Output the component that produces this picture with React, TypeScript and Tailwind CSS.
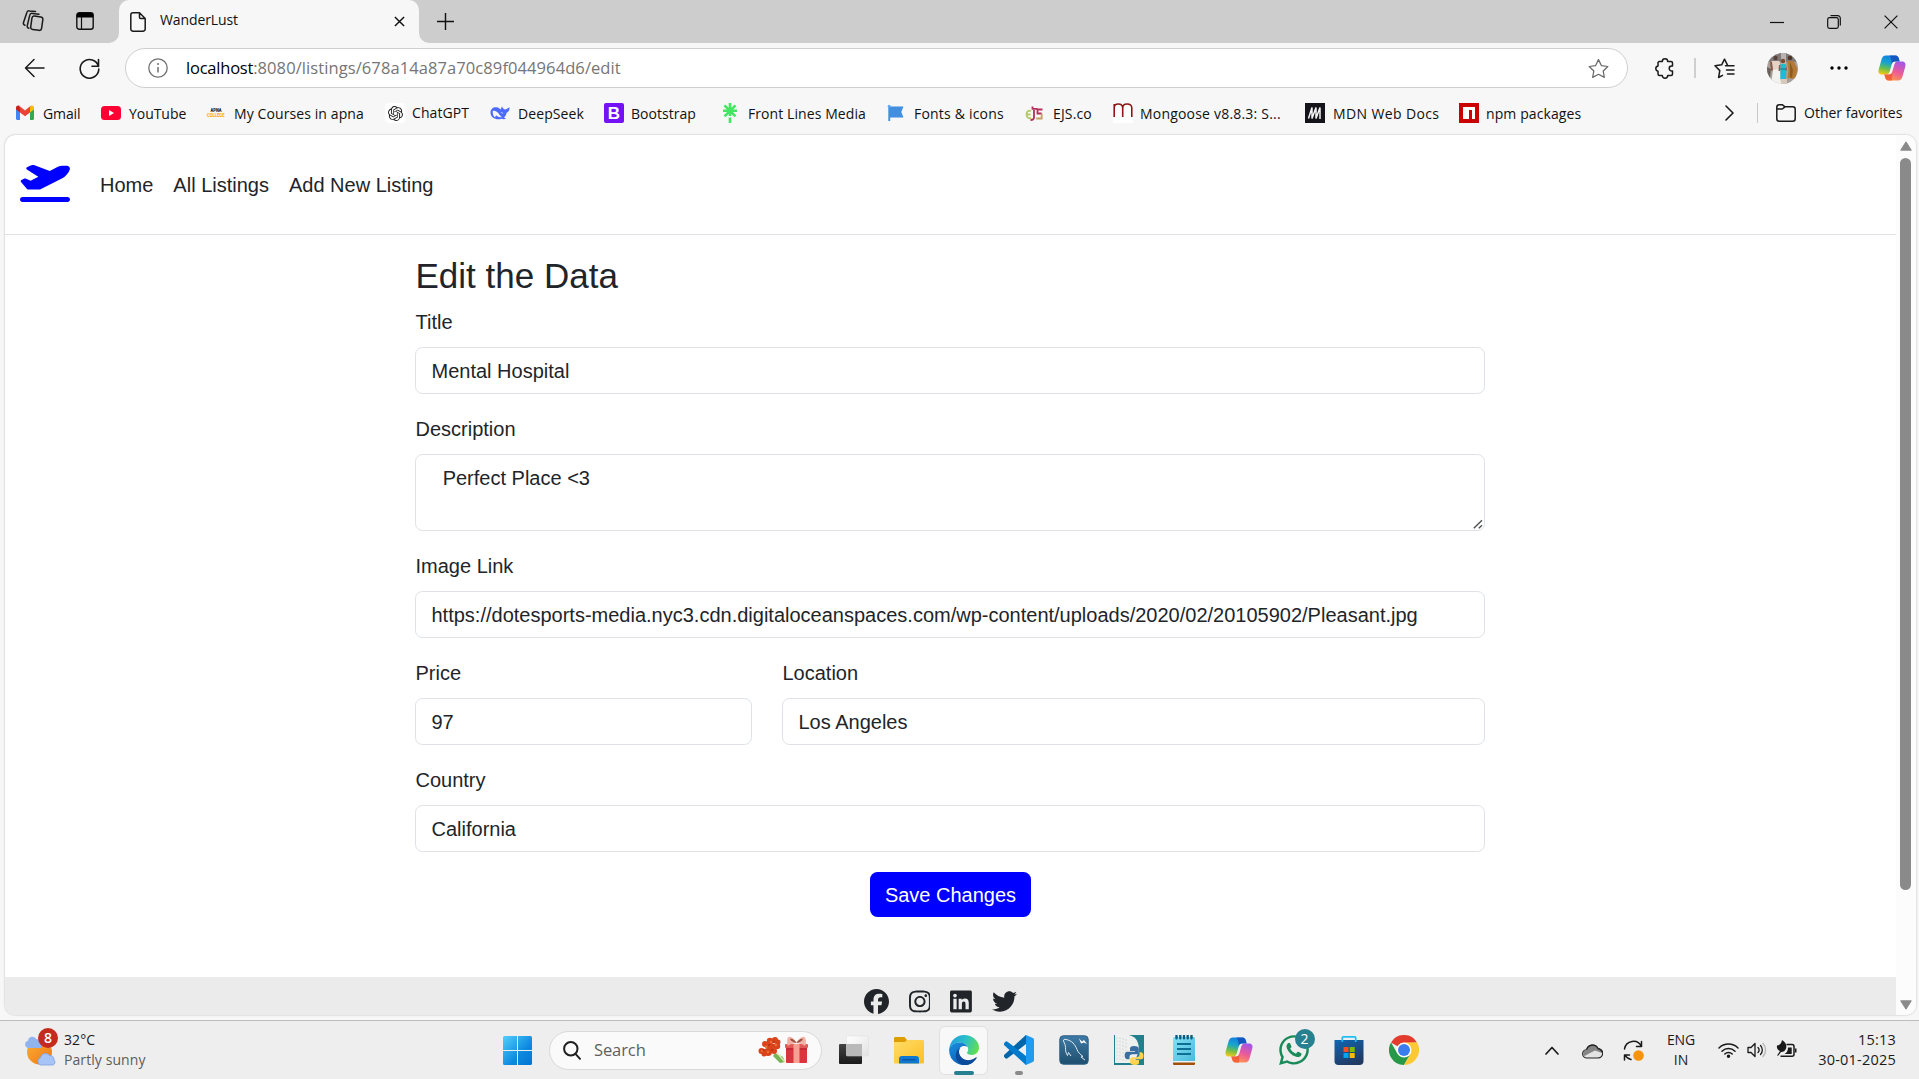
import React from "react";
import { FaPlaneDeparture, FaFacebook, FaInstagram, FaLinkedin, FaTwitter, FaWhatsapp } from "react-icons/fa6";
import { SiOpenai } from "react-icons/si";

const UI = "font-['Open_Sans',sans-serif]";

function CopilotIcon({ id, className }: { id: string; className: string }) {
  return (
    <svg viewBox="0 0 28 26" className={className}>
      <defs>
        <linearGradient id={id + "a"} x1="0.5" y1="0" x2="0.25" y2="1">
          <stop offset="0" stopColor="#0f7fe6" />
          <stop offset="0.4" stopColor="#1aa5c9" />
          <stop offset="0.7" stopColor="#6cc04a" />
          <stop offset="1" stopColor="#f6c813" />
        </linearGradient>
        <linearGradient id={id + "b"} x1="0.7" y1="0" x2="0.3" y2="1">
          <stop offset="0" stopColor="#a456e8" />
          <stop offset="0.5" stopColor="#ea5a9a" />
          <stop offset="1" stopColor="#ff9a4c" />
        </linearGradient>
      </defs>
      <path d="M8 .5h9.500c2 0 2.800 1.400 3.300 3l.9 3H17c-2 0-2.800 1.200-3.300 3l-2 7c-.6 2-1.700 3-3.700 3H4.500C1 19.500 0 17.500.7 14.500L3.500 4.500C4.300 1.800 5.500.5 8 .5z" fill={`url(#${id}a)`} />
      <path d="M14 .5h3.500c2 0 2.800 1.400 3.300 3l.9 3H17c-2 0-2.800 1.200-3.300 3C13.500 6 13.500 3 11.500.5z" fill="#1647b5" opacity=".75" />
      <path d="M20 25.500h-9.500c-2 0-2.800-1.400-3.300-3l-.9-3H11c2 0 2.800-1.200 3.300-3l2-7c.6-2 1.700-3 3.700-3h3.500c3.500 0 4.500 2 3.800 5L24.500 21.500c-.8 2.700-2 4-4.500 4z" fill={`url(#${id}b)`} />
      <path d="M14 25.500h-3.500c-2 0-2.800-1.400-3.300-3l-.9-3H11c2 0 2.800-1.200 3.300-3z" fill="#f0532f" opacity=".75" />
    </svg>
  );
}

const line = { fill: "none", stroke: "#1a1a1a", strokeLinecap: "round" as const, strokeLinejoin: "round" as const };

function TitleBar() {
  return (
    <div className="flex h-[43px] bg-[#cdcdcd]">
      <div className="flex w-[119px] shrink-0 items-center pb-px pl-[22px]">
        <svg viewBox="0 0 22 22" className="h-[22px] w-[22px]" {...line} strokeWidth="1.500">
          <rect x="9.300" y="6.500" width="11" height="13.500" rx="2.300" transform="rotate(8 15 13)" />
          <path d="M17 4.200 10.500 3.400a2.500 2.500 0 0 0-2.800 2L5.300 15.500a2.200 2.200 0 0 0 1.500 2.700M13.500 1.500 7.500.9A2.500 2.500 0 0 0 4.700 2.900L1.500 12.500a2.200 2.200 0 0 0 1.400 2.700" />
        </svg>
        <svg viewBox="0 0 18 18" className="ml-[32px] h-[18px] w-[18px]">
          <rect x=".8" y=".8" width="16.400" height="16.400" rx="2.500" fill="none" stroke="#111" strokeWidth="1.400" />
          <path d="M.8 5.500V3.300A2.500 2.500 0 0 1 3.300.8h11.400a2.500 2.500 0 0 1 2.500 2.500v2.200z" fill="#000" />
          <path d="M5.500 5v12" stroke="#111" strokeWidth="1.200" />
        </svg>
      </div>
      <div className="relative flex w-[300px] shrink-0 items-center rounded-t-[10px] bg-[#f7f7f7] pl-[11px]">
        <svg viewBox="0 0 10 10" className="absolute bottom-0 -left-[10px] h-[10px] w-[10px]"><path d="M10 0v10H0A10 10 0 0 0 10 0z" fill="#f7f7f7" /></svg>
        <svg viewBox="0 0 10 10" className="absolute -right-[10px] bottom-0 h-[10px] w-[10px]"><path d="M0 0v10h10A10 10 0 0 1 0 0z" fill="#f7f7f7" /></svg>
        <svg viewBox="0 0 16 20" className="h-5 w-4" {...line} strokeWidth="1.500">
          <path d="M9.500.8H3A2.200 2.200 0 0 0 .8 3v14A2.200 2.200 0 0 0 3 19.200h10a2.200 2.200 0 0 0 2.200-2.200V6.500zM9.500.8v4.500a1.200 1.200 0 0 0 1.200 1.200h4.500" />
        </svg>
        <span className="ml-[14px] w-[234px] pb-[3px] text-[14px] leading-[20px] tracking-[-0.1px] text-[#111]">WanderLust</span>
        <svg viewBox="0 0 12 12" className="h-[11px] w-[11px]"><path d="M1 1l10 10M11 1 1 11" stroke="#111" strokeWidth="1.600" /></svg>
      </div>
      <div className="flex flex-1 items-center pb-px pl-[18px]">
        <svg viewBox="0 0 18 18" className="h-[17px] w-[17px]"><path d="M9 0v18M0 9h18" stroke="#111" strokeWidth="1.500" /></svg>
      </div>
      <div className="flex items-center pr-[21px]">
        <svg viewBox="0 0 14 14" className="h-[14px] w-[14px]"><path d="M0 7.500h14" stroke="#111" strokeWidth="1.200" /></svg>
        <svg viewBox="0 0 14 14" className="ml-[43px] h-[14px] w-[14px]" fill="none" stroke="#111" strokeWidth="1.200">
          <rect x=".7" y="2.700" width="10.600" height="10.600" rx="1.800" />
          <path d="M3.500.7h7.300a2.500 2.500 0 0 1 2.500 2.500v7.300" />
        </svg>
        <svg viewBox="0 0 14 14" className="ml-[43px] h-[14px] w-[14px]"><path d="M.6.6l12.800 12.800M13.400.6.6 13.400" stroke="#111" strokeWidth="1.200" /></svg>
      </div>
    </div>
  );
}

function Toolbar() {
  return (
    <div className="flex h-[50px] items-center pl-6">
      <svg viewBox="0 0 21 20" className="h-5 w-[21px]" {...line} strokeWidth="1.500"><path d="M20 10H1.500M10 1.500 1.500 10l8.500 8.500" /></svg>
      <svg viewBox="0 0 21 21" className="ml-[34px] h-[21px] w-[21px]" {...line} strokeWidth="1.600"><path d="M19.500 8.500A9.300 9.300 0 1 0 19.800 11M19.500 1.500v6.800h-6.500" /></svg>
      <div className="ml-[25px] flex h-10 w-[1503px] shrink-0 items-center rounded-full border border-[#cfcfcf] bg-white pl-[22px]">
        <svg viewBox="0 0 20 20" className="h-5 w-5"><circle cx="10" cy="10" r="9.200" fill="none" stroke="#707070" strokeWidth="1.300" /><path d="M10 9v5.500" stroke="#707070" strokeWidth="1.500" /><circle cx="10" cy="6" r="1" fill="#707070" /></svg>
        <span className="ml-[18px] flex-1 whitespace-nowrap text-[16.5px] leading-[24px] tracking-[0.09px] text-[#757575]">
          <span className="tracking-[-0.22px] text-black">localhost</span>:8080/listings/678a14a87a70c89f044964d6/edit
        </span>
        <svg viewBox="0 0 22 21" className="mr-[18px] h-[21px] w-[21px]" fill="none" stroke="#6a6a6a" strokeWidth="1.300" strokeLinejoin="round"><path d="M11 1.200l3 6.200 6.800 1-4.900 4.700 1.200 6.700-6.100-3.200-6.100 3.200 1.200-6.700L1.200 8.400l6.800-1z" /></svg>
      </div>
      <svg viewBox="0 0 19 21" className="ml-[27px] h-[21px] w-[19px]" {...line} strokeWidth="1.500">
        <path d="M4 3.500h3.300a2.700 2.700 0 0 1 5.400 0H16a1.500 1.500 0 0 1 1.500 1.500v3h-.8a2.500 2.500 0 0 0 0 5h.8v3a1.500 1.500 0 0 1-1.500 1.500h-3.300a2.700 2.700 0 0 1-5.400 0H4.500A1.500 1.500 0 0 1 3 16v-2.800a2.700 2.700 0 0 1 0-5.300V4.500z" />
      </svg>
      <div className="ml-5 h-5 w-[2px] bg-[#cfcfcf]" />
      <svg viewBox="0 0 21 21" className="ml-[18px] h-[21px] w-[21px]" {...line} strokeWidth="1.500">
        <path d="M13.500 7.200l-3-6-2.800 5.600-6.700 1 4.800 4.800L4.600 19.500l3.900-2.100M11.500 7.800H20M12.500 12H20M13.500 16H20" />
      </svg>
      <svg viewBox="0 0 31 31" className="ml-8 h-[31px] w-[31px]">
        <clipPath id="av"><circle cx="15.500" cy="15.500" r="15.500" /></clipPath>
        <g clipPath="url(#av)">
          <rect width="31" height="31" fill="#a5a09c" />
          <rect y="0" width="31" height="9" fill="#7f7a78" />
          <path d="M14 0h5v12h-5z" fill="#b9b4b0" />
          <circle cx="8.500" cy="5" r="2.200" fill="#5b4038" />
          <path d="M4.500 8h8l1 6-2 4H6z" fill="#e6d2c4" />
          <path d="M3 9l2 0 1 8-2 1z" fill="#8a5a44" />
          <path d="M6 17l7-1 1 15H4z" fill="#f3f2ee" />
          <path d="M0 14l4 2-1 9-3-2z" fill="#6d6259" />
          <circle cx="16" cy="8" r="2.200" fill="#7c4b33" />
          <path d="M13.500 11h5l.8 7-.5 8h-5.500l.4-9z" fill="#18bdd8" />
          <path d="M12 12l1.500 0-.5 6-1.500 0zM19 12l1 5-1 1z" fill="#8a5a44" />
          <path d="M13.500 15h5.500v2h-5.500z" fill="#2590a8" />
          <circle cx="23" cy="5" r="2.300" fill="#4e3328" />
          <path d="M20 8h6.500l4 8-2 10-8-1 1-8z" fill="#b47a35" />
          <path d="M23 9l3 8-1 8-2-1z" fill="#8f5a22" />
          <path d="M14 26h6v5h-6z" fill="#d9c9bd" />
        </g>
      </svg>
      <svg viewBox="0 0 18 4" className="ml-8 h-1 w-[18px]"><circle cx="2" cy="2" r="1.700" /><circle cx="9" cy="2" r="1.700" /><circle cx="16" cy="2" r="1.700" /></svg>
      <CopilotIcon id="ct" className="ml-[30px] h-[26px] w-7" />
    </div>
  );
}

const bookmarks: { label: string; w: string; t: string; icon: React.ReactNode }[] = [
  { label: "Gmail", w: "w-[86px]", t: "pt-[2px] tracking-[-0.1px]", icon: (
    <svg viewBox="0 0 20 20" className="h-5 w-5">
      <path d="M1 5.500v10.300c0 .7.500 1.200 1.200 1.200H5V8.500z" fill="#4285f4" /><path d="M15 8.500V17h2.800c.7 0 1.200-.5 1.200-1.200V5.500z" fill="#34a853" />
      <path d="M15 4.500v5l4-3V4.800c0-1.900-2.100-2.900-3.500-1.800z" fill="#fbbc04" /><path d="M1 4.800v1.700l4 3v-5l-.5-1.500C3.100 1.900 1 2.900 1 4.800z" fill="#c5221f" /><path d="M5 9.500v-5l-.7-1.700L10 7.500l5.700-4.700-.7 1.700v5L10 13.200z" fill="#ea4335" />
    </svg>) },
  { label: "YouTube", w: "w-[105px]", t: "pt-[2px] tracking-[-0.05px]", icon: (
    <svg viewBox="0 0 20 20" className="h-5 w-5"><rect y="3" width="20" height="14" rx="3.500" fill="#ff0033" /><path d="M8 7v6l5-3z" fill="#fff" /></svg>) },
  { label: "My Courses in apna", w: "w-[179px]", t: "pt-[2px] tracking-[0.1px]", icon: (
    <svg viewBox="0 0 20 20" className="h-5 w-5 overflow-visible">
      <text x="4.500" y="9" fontSize="4.500" fontWeight="900" fontFamily="Roboto" fill="#222" textLength="11" lengthAdjust="spacingAndGlyphs">APNA</text>
      <text x="1" y="14" fontSize="5" fontWeight="900" fontFamily="Roboto" fill="#ffa814" textLength="17.500" lengthAdjust="spacingAndGlyphs">COLLEGE</text>
    </svg>) },
  { label: "ChatGPT", w: "w-[105px]", t: "pt-0 -ml-px tracking-[0.1px]", icon: (
    <span className="flex h-5 w-5 items-center justify-center rounded-[4px] bg-white"><SiOpenai className="h-[15px] w-[15px] text-[#222]" /></span>) },
  { label: "DeepSeek", w: "w-[114px]", t: "pt-[2px] tracking-[0.1px]", icon: (
    <svg viewBox="0 0 20 20" className="h-5 w-5">
      <path d="M.5 9.500C.5 6 3 4 6.500 4.200c2 .1 3 1.300 4.200 2.300.6-.8.5-2 1.300-3 1 1.800 1.800 3 3.500 3 1.300-.6 2.500-1.500 4-2.200.2 2.800-.9 4.700-2.900 5.500-.3 2-1.300 3.600-2.600 4.700.6.5 1.400.7 2 .9-1.300 1-3 .9-4.300.3C6.500 17.500.5 15 .5 9.500z" fill="#4d6bfe" />
      <path d="M2.800 7.800c2.800-.4 4.800 1.300 6.200 3.200.9 1.300 1.700 2.500 2.900 3.100-2.300.6-4-.3-5.200-1.500-.9.300-1.500 1-1.600 1.900C3.300 13 2.400 10.800 2.800 7.800zM10.500 9c1.200-.3 2.500.6 2.700 1.900z" fill="#f7f7f7" />
    </svg>) },
  { label: "Bootstrap", w: "w-[116px]", t: "-ml-px pt-[2px] tracking-[0.02px]", icon: (
    <span className="flex h-5 w-5 items-center justify-center rounded-[2px] bg-[#7411f5] font-['Liberation_Sans',sans-serif] text-[17px] leading-none font-bold text-white">B</span>) },
  { label: "Front Lines Media", w: "w-[166px]", t: "pt-[2px] tracking-[0.08px]", icon: (
    <svg viewBox="0 0 20 20" className="h-5 w-5"><path d="M10 0v13M3 7.800h14M4.500 2.300l11 11M15.500 2.300l-11 11M10 14.500V20" stroke="#43e660" strokeWidth="2.600" /></svg>) },
  { label: "Fonts & icons", w: "w-[139px]", t: "pt-[2px] tracking-[0.2px]", icon: (
    <svg viewBox="0 0 20 20" className="h-5 w-5"><path d="M3 3.500h14.500l-2.200 5.500 2.200 5.500H4.200V18H2.300V3.500z" fill="#418fde" /><circle cx="3.200" cy="3.200" r="1.500" fill="#62a8ee" /></svg>) },
  { label: "EJS.co", w: "w-[88px]", t: "pt-[2px] tracking-[0.15px]", icon: (
    <svg viewBox="0 0 20 20" className="h-5 w-5" fill="none" strokeWidth="1.800"><path d="M6 8C3 7 1.500 9 1.500 11.500S3.500 16 6 15M1.500 11.500h4" stroke="#b4ca65" /><path d="M9 7v7.500c0 2-1 2.500-3.500 2.500M7.500 3.500v2.300h5" stroke="#b52e57" /><path d="M17.500 6.500h-5v4h4.200" stroke="#b52e57" /><path d="M16.700 10.500V15.500h-5.500" stroke="#c4a05f" /></svg>) },
  { label: "Mongoose v8.8.3: S...", w: "w-[192px]", t: "-ml-px pt-[2px] tracking-[0.2px]", icon: (
    <svg viewBox="0 0 20 20" className="h-5 w-5"><rect width="20" height="20" y="1" fill="#fff" /><path d="M1.200 14V1M1.200 5c0-2.700 1.500-4 4-4s4.500 1.300 4.500 4v9M9.700 5c0-2.700 1.500-4 4.300-4s4.800 1.300 4.800 4v9" fill="none" stroke="#8f1515" strokeWidth="1.600" /></svg>) },
  { label: "MDN Web Docs", w: "w-[154px]", t: "pt-[2px] tracking-[0.37px]", icon: (
    <svg viewBox="0 0 20 20" className="h-5 w-5"><rect width="20" height="20" fill="#15141a" /><path d="M3.500 15.500 7 4.500v11l4-11v11l4-11v11.500" fill="none" stroke="#f4f4f4" strokeWidth="1.500" strokeLinejoin="bevel" /></svg>) },
  { label: "npm packages", w: "w-[130px]", t: "-ml-px pt-[2px] tracking-[0.1px]", icon: (
    <svg viewBox="0 0 20 20" className="h-5 w-5"><rect width="20" height="20" fill="#cb0000" /><path d="M4 4h12v12h-3V7h-3v9H4z" fill="#fff" /></svg>) },
];

function BookmarksBar() {
  return (
    <div className="flex h-[42px] items-center pb-[2px] pl-[15px] text-[14px] leading-[20px] text-[#111]">
      {bookmarks.map((b) => (
        <div key={b.label} className={"flex shrink-0 items-center gap-2 " + b.w}>
          <span className="shrink-0">{b.icon}</span>
          <span className={"whitespace-nowrap " + b.t}>{b.label}</span>
        </div>
      ))}
      <svg viewBox="0 0 9 16" className="ml-[136px] h-4 w-[9px]" {...line} strokeWidth="1.600"><path d="M1 1l7 7-7 7" /></svg>
      <div className="ml-[23px] h-5 w-px bg-[#c8c8c8]" />
      <svg viewBox="0 0 20 18" className="ml-[18px] h-[18px] w-5" {...line} strokeWidth="1.500"><path d="M.8 4.500V3.300A2.500 2.500 0 0 1 3.300.8h3.200l2.500 2H16.700a2.500 2.500 0 0 1 2.500 2.500v9.400a2.500 2.500 0 0 1-2.500 2.500H3.300a2.500 2.500 0 0 1-2.500-2.500zM.8 5h5.500L9 2.900" /></svg>
      <span className="ml-2 whitespace-nowrap tracking-[0px]">Other favorites</span>
    </div>
  );
}

const box = "rounded-[7.5px] border border-[#dee2e6] bg-white pr-[15px] pl-[15.5px] text-[20px] leading-[30px] text-[#212529] outline-none";

function Field({ label, value, className = "" }: { label: string; value: string; className?: string }) {
  return (
    <div className={"mb-5 flex flex-col " + className}>
      <label className="mb-[10px] pl-[0.5px] leading-[30px]">{label}</label>
      <input readOnly value={value} className={"h-[47px] w-full pt-[2px] " + box} />
    </div>
  );
}

function Page() {
  return (
    <div className="mr-[3px] ml-[5px] flex h-[880px] overflow-hidden rounded-[10px] bg-white font-['Liberation_Sans',Arial,sans-serif] text-[20px] text-[#212529] shadow-[0_0_2px_rgba(0,0,0,0.3)]">
      <div className="flex w-[1891px] shrink-0 flex-col">
        <nav className="flex h-[100px] shrink-0 items-center gap-5 border-b border-[#dee2e6] pl-[15px]">
          <FaPlaneDeparture className="mt-[-6px] mr-[10px] h-10 w-[50px] text-[#0000ff]" />
          <a>Home</a>
          <a>All Listings</a>
          <a>Add New Listing</a>
        </nav>
        <main className="ml-[410px] h-[742px] w-[1070px] shrink-0 pt-5">
          <h3 className="mb-[10px] pl-[0.5px] text-[35px] leading-[42px]">Edit the Data</h3>
          <Field label="Title" value="Mental Hospital" />
          <div className="relative mb-5 flex flex-col">
            <label className="mb-[10px] pl-[0.5px] leading-[30px]">Description</label>
            <textarea readOnly value="  Perfect Place <3" className={"h-[77px] w-full resize-none py-[7.5px] " + box} />
            <svg viewBox="0 0 10 10" className="absolute right-[2px] bottom-[2px] h-[10px] w-[10px]" stroke="#4a4a4a" strokeWidth="1.300"><path d="M.8 9.200 9 1.200M5.800 9.200 9 6.200" /></svg>
          </div>
          <Field label="Image Link" value="https://dotesports-media.nyc3.cdn.digitaloceanspaces.com/wp-content/uploads/2020/02/20105902/Pleasant.jpg" />
          <div className="flex gap-[30px]">
            <Field label="Price" value="97" className="w-[337px]" />
            <Field label="Location" value="Los Angeles" className="flex-1" />
          </div>
          <Field label="Country" value="California" />
          <div className="flex justify-center">
            <button className="h-[45px] w-[161px] rounded-[7.5px] bg-[#0000ff] pl-px leading-[30px] whitespace-nowrap text-white">Save Changes</button>
          </div>
        </main>
        <footer className="flex h-[38px] shrink-0 items-start gap-5 bg-[#ebebeb] pt-3 pl-[858.5px]">
          <FaFacebook className="h-[25px] w-[25px]" />
          <FaInstagram className="h-[25px] w-[21.875px]" />
          <FaLinkedin className="h-[25px] w-[21.875px]" />
          <FaTwitter className="h-[25px] w-[25px]" />
        </footer>
      </div>
      <div className="flex w-[20px] flex-col items-center bg-[#fcfcfc] pt-[6px] pr-px">
        <svg viewBox="0 0 12 10" className="h-[10px] w-3"><path d="M6 .8 11.300 9.200H.7z" fill="#8a8a8a" stroke="#8a8a8a" strokeLinejoin="round" /></svg>
        <div className="mt-[7px] h-[732px] w-[11px] rounded-full bg-[#8a8a8a]" />
        <svg viewBox="0 0 12 10" className="mt-[110px] h-[10px] w-3"><path d="M6 9.200.7.8h10.600z" fill="#8a8a8a" stroke="#8a8a8a" strokeLinejoin="round" /></svg>
      </div>
    </div>
  );
}

const apps: { name: string; icon: React.ReactNode }[] = [
  { name: "Task view", icon: (
    <svg viewBox="0 0 30 30" className="h-[30px] w-[30px]">
      <defs><linearGradient id="tv" x1="0" y1="0" x2="0" y2="1"><stop offset="0" stopColor="#444" /><stop offset="1" stopColor="#1a1a1a" /></linearGradient><linearGradient id="tw" x1="0" y1="0" x2="1" y2="1"><stop offset="0" stopColor="#fff" /><stop offset="1" stopColor="#e2e2e2" /></linearGradient></defs>
      <rect x="0" y="9" width="23" height="20" rx="1" fill="url(#tv)" /><rect x="7.500" y="1" width="22" height="20" rx="1" fill="url(#tw)" stroke="#dcdcdc" strokeWidth=".5" /><path d="M7.500 9H23v12H8.500a1 1 0 0 1-1-1z" fill="#b9b9b9" />
    </svg>) },
  { name: "Explorer", icon: (
    <svg viewBox="0 0 30 30" className="h-[30px] w-[30px]">
      <defs><linearGradient id="ex" x1="0" y1="0" x2="1" y2="1"><stop offset="0" stopColor="#ffdc6a" /><stop offset="1" stopColor="#fdbf22" /></linearGradient></defs>
      <path d="M0 3.500C0 2.500.5 2 1.500 2h9l2.500 3h16v5H0z" fill="#df9d05" /><path d="M0 7h11l2-2h15.500c1 0 1.500.5 1.500 1.500V27c0 1-.5 1.500-1.500 1.500h-27C.5 28.500 0 28 0 27z" fill="url(#ex)" />
      <path d="M5 28.500V24a3 3 0 0 1 3-3h14a3 3 0 0 1 3 3v4.500z" fill="#1177d1" /><path d="M8.500 24.800h13" stroke="#0a4f96" strokeWidth="1.200" />
    </svg>) },
  { name: "Edge", icon: (
    <svg viewBox="0 0 30 30" className="h-[30px] w-[30px]">
      <defs>
        <linearGradient id="e1" x1="0" y1=".3" x2="1" y2=".6"><stop offset="0" stopColor="#1f9fe0" /><stop offset=".5" stopColor="#2cc0c8" /><stop offset="1" stopColor="#63df4e" /></linearGradient>
        <linearGradient id="e2" x1="0" y1="0" x2=".6" y2="1"><stop offset="0" stopColor="#1b8fdf" /><stop offset="1" stopColor="#0b5cb4" /></linearGradient>
      </defs>
      <path d="M.3 13C1.500 5.500 7.500 0 15 0c8.500 0 15 6 15 12.500 0 4.500-3.200 7.500-7.200 7.500-3 0-4.800-1-4.800-2.200 0-.8 1.200-1.200 1.200-3.300C19.200 10.500 15.500 7.500 10.500 7.500 6 7.500 2 9.800.3 13z" fill="url(#e1)" />
      <path d="M.2 14C1 10 5.500 7.500 10.500 7.500c4 0 7 2 8.200 4.500-1-.7-2.300-1-3.500-1-4 0-6.200 3.500-5.200 7.500 1.200 5 6.500 8.500 12.500 6.800L24 27.200A15 15 0 0 1 .2 14z" fill="url(#e2)" />
      <path d="M11.500 12.500c-1.500 2-1.800 4-1.200 6.200 1.500 5 7 7.500 12 6 1.800-.5 3.200-1.200 4.500-2.200.6-.4 1.100.2.8.7-2.600 4.200-6.800 6.800-11.600 6.800-5.500-.5-9.500-4.500-9.200-9.800.2-4 2.700-6.500 4.700-7.700z" fill="#0c4a9c" />
    </svg>) },
  { name: "VS Code", icon: (
    <svg viewBox="0 0 30 30" className="h-[30px] w-[30px]">
      <path d="M22 9 3.500 23.300a1.600 1.600 0 0 1-2.100-.1L.3 22a1.500 1.500 0 0 1 0-2.300L22 0z" fill="#0065a9" /><path d="M22 21 3.500 6.700a1.600 1.600 0 0 0-2.100.1L.3 8a1.500 1.500 0 0 0 0 2.300L22 30z" fill="#007acc" />
      <path d="M22 30c-.8 0-1.300-.3-1.800-.8.900.8 1.800.3 1.800-.8V1.600c0-1.100-1-1.600-1.800-.8.500-.5 1-.8 1.800-.8l6.800 3c.8.400 1.200 1 1.200 1.800v20.400c0 .8-.4 1.400-1.200 1.800z" fill="#1f9cf0" />
    </svg>) },
  { name: "MySQL Workbench", icon: (
    <svg viewBox="0 0 30 30" className="h-[30px] w-[30px]">
      <defs><linearGradient id="my" x1="0" y1="0" x2="0" y2="1"><stop offset="0" stopColor="#3f7ba6" /><stop offset="1" stopColor="#1f4e6e" /></linearGradient></defs>
      <rect x=".8" y=".8" width="28.400" height="28.400" rx="3.500" fill="url(#my)" stroke="#2a5f85" />
      <path d="M4.500 6c-.5-1.500 1-2 2.500-1.500 6 1 9 5 11 10 1 3 3 4.500 6 7l-2 .5 4 3M4.500 6c1 2.500 2 4 2 6.500s0 5 2 8l1-3 2.500 3.500" fill="none" stroke="#dfeaf1" strokeWidth="1" />
      <path d="M20 3.500l3 3 2-1.500 3 4-3-1.500-3 1z" fill="#fff" />
    </svg>) },
  { name: "Python", icon: (
    <svg viewBox="0 0 30 30" className="h-[30px] w-[30px]">
      <rect width="30" height="30" fill="#247f8d" /><path d="M1 0h14c8 2 10 8 10 16L20 28H1z" fill="#eef0ef" /><path d="M3 2v25M6 2v25M9 3v24M12 4v22" stroke="#cfd2d1" strokeWidth=".8" strokeDasharray="2 1.500" />
      <path d="M20 11c-3 0-4 1-4 2.700V16h5v.8h-7.500c-2 0-2.800 1.600-2.800 3.700 0 2.200 1 3.800 2.800 3.800h2V22c0-1.700 1.300-2.700 2.800-2.700h4.200c1.500 0 2.300-1 2.300-2.400v-3.200c0-1.700-1.700-2.700-4.800-2.700z" fill="#3a6ea0" />
      <path d="M21 30c3 0 4-1 4-2.700V25h-5v-.8h7c2 0 2.500-1.400 2.500-3.500 0-2.200-1-3.500-2.500-3.500h-1.500v2.300c0 1.700-1.300 2.700-2.800 2.700h-4c-1.500 0-2.500 1-2.500 2.400v2.700c0 1.700 1.700 2.700 4.800 2.700z" fill="#ffd44c" />
    </svg>) },
  { name: "Notepad", icon: (
    <svg viewBox="0 0 30 30" className="h-[30px] w-[30px]">
      <defs><linearGradient id="np" x1="0" y1="0" x2="1" y2="1"><stop offset="0" stopColor="#83e1f3" /><stop offset="1" stopColor="#4bbbdc" /></linearGradient></defs>
      <path d="M4 26.500h22V29a1 1 0 0 1-1 1H5a1 1 0 0 1-1-1z" fill="#a0500a" /><path d="M4 25.500h22v2H4z" fill="#f1f1f1" /><path d="M4 3.500C4 2.500 4.500 2 5.500 2h19c1 0 1.500.5 1.500 1.500V26H4z" fill="url(#np)" />
      <path d="M8 9h14M8 14h14M8 19h14" stroke="#0d6f93" strokeWidth="1.800" /><path d="M7.500.8v2.400M11.300.8v2.400M15 .8v2.400M18.700.8v2.400M22.500.8v2.400" stroke="#0b5c80" strokeWidth="2.400" strokeLinecap="round" />
    </svg>) },
  { name: "Copilot", icon: <CopilotIcon id="cb" className="h-[26px] w-7" /> },
  { name: "WhatsApp", icon: (
    <span className="relative flex"><FaWhatsapp className="h-[34px] w-[34px] text-[#198a58]" />
      <span className="absolute -top-[4px] left-[18px] flex h-5 w-5 items-center justify-center rounded-full bg-[#26808f] text-[14px] leading-none text-white">2</span></span>) },
  { name: "Store", icon: (
    <svg viewBox="0 0 30 30" className="h-[30px] w-[30px]">
      <defs><linearGradient id="st" x1="0" y1="0" x2=".5" y2="1"><stop offset="0" stopColor="#0f66b5" /><stop offset="1" stopColor="#213a63" /></linearGradient></defs>
      <path d="M.5 5h29v21a4 4 0 0 1-4 4h-21a4 4 0 0 1-4-4z" fill="url(#st)" /><path d="M8.300 7V2.800c0-.6.400-1 1-1h11.400c.6 0 1 .4 1 1V7" fill="none" stroke="#22bdf2" strokeWidth="1.700" />
      <path d="M9.500 12h5v5h-5z" fill="#f25022" /><path d="M15.700 12h5v5h-5z" fill="#7fba00" /><path d="M9.500 18h5v5h-5z" fill="#00a4ef" /><path d="M15.700 18h5v5h-5z" fill="#ffb900" />
    </svg>) },
  { name: "Chrome", icon: (
    <svg viewBox="0 0 30 30" className="h-[30px] w-[30px]">
      <path d="M15 15 2 7.500A15 15 0 0 1 28 7.500L15 8z" fill="#e33b2e" /><path d="M2 7.500A15 15 0 0 0 15 30l6.500-11.300L15 15 8.500 18.700z" fill="#279847" /><path d="M15 30A15 15 0 0 0 28 7.500H15L21.500 18.700z" fill="#fcc934" />
      <circle cx="15" cy="15" r="7.500" fill="#fff" /><circle cx="15" cy="15" r="6" fill="#3b7ded" />
    </svg>) },
];

function Taskbar() {
  return (
    <div className="mt-auto flex h-[59px] items-center border-t border-[#bdbdbd] bg-[#eeeeee] text-[14px] text-[#1b1b1b]">
      <div className="flex w-[503px] shrink-0 items-center pl-6">
        <span className="relative -mt-[2px] flex">
          <svg viewBox="0 0 32 34" className="h-[34px] w-8">
            <defs><linearGradient id="sn" x1="0" y1="0" x2="1" y2="1"><stop offset="0" stopColor="#f9b02f" /><stop offset="1" stopColor="#f0761c" /></linearGradient></defs>
            <circle cx="15.500" cy="20" r="12.500" fill="url(#sn)" />
            <path d="M4 16a3.700 3.700 0 0 1 0-7.200 4.500 4.500 0 0 1 8.500-1.500A4 4 0 0 1 17 11v5z" fill="#8fb4ee" />
            <path d="M16.500 33a4 4 0 0 1 0-7.500 5 5 0 0 1 9-2A4 4 0 0 1 30 28a3 3 0 0 1-1 5z" fill="#a6c4f5" stroke="#7fa0dd" strokeWidth=".8" />
          </svg>
          <span className="absolute -top-[4px] left-[14px] flex h-5 w-5 items-center justify-center rounded-full bg-[#c42b1c] text-[14px] leading-none font-semibold text-white">8</span>
        </span>
        <span className="ml-2 flex flex-col leading-[20px] tracking-[0.08px]"><span>32°C</span><span className="text-[#5d5d5d]">Partly sunny</span></span>
      </div>
      <svg viewBox="0 0 29 29" className="h-[29px] w-[29px] shrink-0">
        <defs><linearGradient id="wn" x1="0" y1="0" x2="1" y2="1"><stop offset="0" stopColor="#52d0fb" /><stop offset=".6" stopColor="#0e8ae0" /><stop offset="1" stopColor="#0573d0" /></linearGradient></defs>
        <path d="M1.500 0H14v14H0V1.500A1.500 1.500 0 0 1 1.500 0zM15 0h12.500A1.500 1.500 0 0 1 29 1.500V14H15zM0 15h14v14H1.500A1.500 1.500 0 0 1 0 27.500zM15 15h14v12.500a1.500 1.500 0 0 1-1.500 1.500H15z" fill="url(#wn)" />
      </svg>
      <div className="ml-[17px] flex h-[39px] w-[273px] shrink-0 items-center rounded-full border border-[#d9d9d9] bg-[#fafafa] pr-[13px] pl-[13px]">
        <svg viewBox="0 0 18 19" className="h-[19px] w-[18px]" fill="none" stroke="#1f1f1f" strokeWidth="2"><circle cx="7.800" cy="7.800" r="6.700" /><path d="M12.500 12.800l4.500 5" strokeLinecap="round" /></svg>
        <span className="ml-[13px] flex-1 pt-px text-[16.5px] tracking-[-0.1px] text-[#5f5f5f]">Search</span>
        <svg viewBox="0 0 50 28" className="h-7 w-[50px]">
          <path d="M17 17l8 4 2 5-5 1-7-7z" fill="#76b455" /><path d="M19 17l8 9" stroke="#d8e8b0" strokeWidth="1.500" />
          <g fill="#d9441a"><circle cx="12" cy="5" r="3.200" /><circle cx="17" cy="4" r="3" /><circle cx="20" cy="6" r="2.500" /><circle cx="7" cy="8" r="3" /><circle cx="13" cy="11" r="4" /><circle cx="19" cy="10" r="3.200" /><circle cx="3.500" cy="15" r="3" /><circle cx="6" cy="18" r="2.500" /><circle cx="10" cy="16" r="4" /><circle cx="16" cy="15" r="3" /></g>
          <g fill="#f0703a"><circle cx="13" cy="6" r="1.200" /><circle cx="8" cy="11" r="1.200" /><circle cx="18" cy="9" r="1.200" /><circle cx="10" cy="16" r="1.200" /><circle cx="4" cy="15" r="1" /></g><g fill="#b52d12"><circle cx="16" cy="6" r="1" /><circle cx="11" cy="9" r="1" /><circle cx="6" cy="14" r="1" /><circle cx="14" cy="14" r="1" /></g>
          <rect x="28" y="9" width="21" height="18" rx="1" fill="#d8353c" /><path d="M28 11h21v3H28z" fill="#b3202b" opacity=".5" /><rect x="27" y="8" width="23" height="4" rx="1" fill="#e05a58" /><path d="M35.500 8h6v19h-6z" fill="#f5a093" />
          <path d="M38.500 7c-1-4-7-8-8.500-5.500C28.500 4 29 9 30 10c2-2 5-2.500 8.500-3zM38.500 7c1-4 7-8 8.500-5.500C48.500 4 48 9 47 10c-2-2-5-2.500-8.500-3z" fill="#f0b3a6" /><path d="M38.500 7c-1.500-3-5-5-6.500-4 1 2 3 3.500 6.500 4zM38.500 7c1.500-3 5-5 6.500-4-1 2-3 3.500-6.500 4z" fill="#9c5346" />
        </svg>
      </div>
      <div className="ml-[4px] flex">
        {apps.map((a) => (
          <div key={a.name} title={a.name} className="relative flex h-[49px] w-[55px] items-center justify-center">
            {a.name === "Edge" && <span className="absolute inset-x-[3px] inset-y-0 rounded-[6px] border border-[#e0e0e0] bg-[#f8f8f8]" />}
            <span className="relative flex">{a.icon}</span>
            {a.name === "Edge" && <span className="absolute bottom-0 left-[17.5px] h-1 w-5 rounded-full bg-[#26808f]" />}
            {a.name === "VS Code" && <span className="absolute bottom-0 left-[23.5px] h-1 w-2 rounded-full bg-[#8a8a8a]" />}
          </div>
        ))}
      </div>
      <div className="ml-auto flex items-center pr-[23px]">
        <svg viewBox="0 0 14 9" className="h-[9px] w-[14px]" {...line} strokeWidth="1.700"><path d="M1 8l6-6.500L13 8" /></svg>
        <svg viewBox="0 0 21 17" className="ml-[23px] h-[17px] w-[21px]"><path d="M5 16a4.200 4.200 0 0 1-.3-8.400A6 6 0 0 1 16 6.600 4.700 4.700 0 0 1 16 16z" fill="#e2e2e2" stroke="#222" strokeWidth="1.200" /><path d="M5 7.300A6 6 0 0 1 15.800 6.300C18.500 6.500 20.300 8.500 20.200 11L13 8.500 8 11l-5.500 3C0 11.500 1.500 7.800 5 7.300z" fill="#858585" /><path d="M4.700 7.600A6 6 0 0 1 16 6.600a4.700 4.700 0 0 1 4 3.500" fill="none" stroke="#222" strokeWidth="1.200" /></svg>
        <svg viewBox="0 0 21 21" className="ml-[20px] h-[21px] w-[21px]"><g {...line} strokeWidth="1.500"><path d="M1.500 9A9 9 0 0 1 18.500 6.500M18.500 1.500v5h-5M8 19.500A9 9 0 0 1 2 15M1.500 20v-5h5" /></g><circle cx="15.500" cy="15.500" r="5.300" fill="#f7940b" /></svg>
        <span className="ml-[22px] flex w-[30px] flex-col items-center leading-[20px] tracking-[-0.1px]"><span>ENG</span><span>IN</span></span>
        <svg viewBox="0 0 21 16" className="ml-[22px] h-4 w-[21px]" {...line} strokeWidth="1.500"><path d="M1 6a13.500 13.500 0 0 1 19 0M4 9.200a9.300 9.300 0 0 1 13 0M6.800 12a5.300 5.300 0 0 1 7.400 0" /><circle cx="10.500" cy="14.200" r="1" fill="#1a1a1a" /></svg>
        <svg viewBox="0 0 20 16" className="ml-2 h-4 w-5" {...line} strokeWidth="1.300"><path d="M1 5.500h3l4-4v13l-4-4H1zM11 5.500a3.700 3.700 0 0 1 0 5M13.500 3.500a6.500 6.500 0 0 1 0 9" /><path d="M16 1.500a9.500 9.500 0 0 1 0 13" stroke="#b5b5b5" /></svg>
        <svg viewBox="0 0 21 18" className="ml-[9px] -mt-[3px] h-[18px] w-[21px]"><path d="M10.500 4.500H16a2 2 0 0 1 2 2v7.700a2 2 0 0 1-2 2H4.500" fill="none" stroke="#1a1a1a" strokeWidth="1.500" /><path d="M19 8.500h1.500v4H19zM12 7.500h3.700v6.500H8.500c2-1 3.500-3 3.500-6.500z" fill="#1a1a1a" /><path d="M6 0c4 2.500 5 5.500 4 8.500-.8 2.500-3 3.700-5 3.500L2 16l-.8-.8L4 11C1.500 10 .5 8 1 5.500 3 5.500 5.500 4 6 0z" fill="#1a1a1a" /></svg>
        <span className="ml-[19px] flex w-[80px] flex-col items-end text-[14.5px] leading-[20px] tracking-[0.22px]"><span>15:13</span><span>30-01-2025</span></span>
      </div>
    </div>
  );
}

export default function App() {
  return (
    <div className={"flex h-[1079px] w-[1919px] flex-col overflow-hidden bg-[#f7f7f7] " + UI}>
      <TitleBar />
      <Toolbar />
      <BookmarksBar />
      <Page />
      <Taskbar />
    </div>
  );
}
